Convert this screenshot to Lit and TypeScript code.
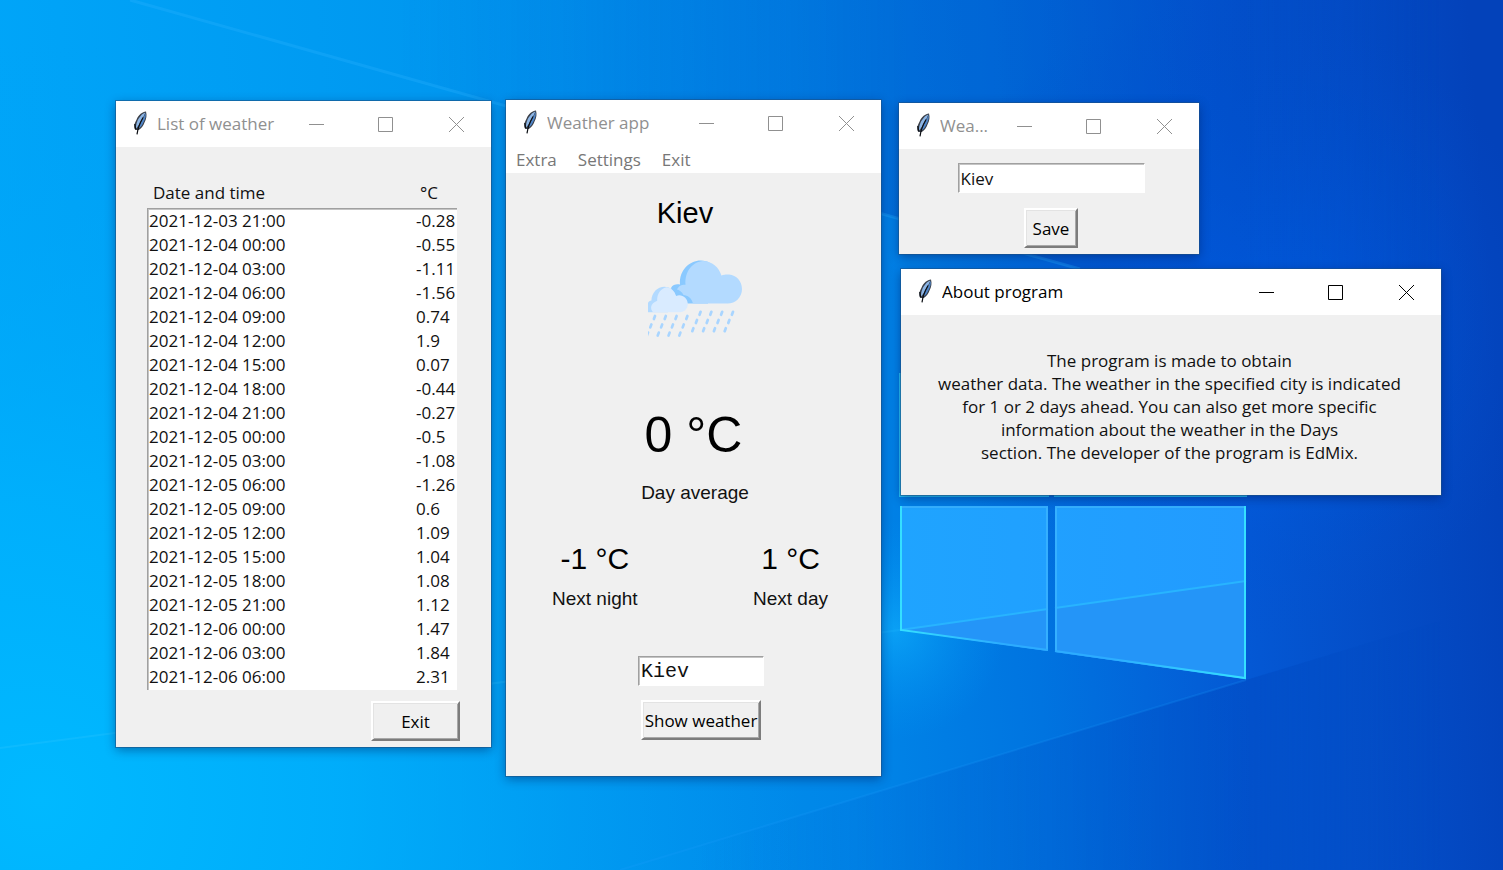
import { LitElement, html, svg, css } from "lit";
import { customElement, property } from "lit/decorators.js";

interface Reading {
  time: string;
  temp: string;
}

const READINGS: Reading[] = [
  { time: "2021-12-03 21:00", temp: "-0.28" },
  { time: "2021-12-04 00:00", temp: "-0.55" },
  { time: "2021-12-04 03:00", temp: "-1.11" },
  { time: "2021-12-04 06:00", temp: "-1.56" },
  { time: "2021-12-04 09:00", temp: "0.74" },
  { time: "2021-12-04 12:00", temp: "1.9" },
  { time: "2021-12-04 15:00", temp: "0.07" },
  { time: "2021-12-04 18:00", temp: "-0.44" },
  { time: "2021-12-04 21:00", temp: "-0.27" },
  { time: "2021-12-05 00:00", temp: "-0.5" },
  { time: "2021-12-05 03:00", temp: "-1.08" },
  { time: "2021-12-05 06:00", temp: "-1.26" },
  { time: "2021-12-05 09:00", temp: "0.6" },
  { time: "2021-12-05 12:00", temp: "1.09" },
  { time: "2021-12-05 15:00", temp: "1.04" },
  { time: "2021-12-05 18:00", temp: "1.08" },
  { time: "2021-12-05 21:00", temp: "1.12" },
  { time: "2021-12-06 00:00", temp: "1.47" },
  { time: "2021-12-06 03:00", temp: "1.84" },
  { time: "2021-12-06 06:00", temp: "2.31" },
];

/** Classic raised buttons and sunken entries, shared by every window. */
const controls = css`
  button.raised {
    box-sizing: border-box;
    height: 40px;
    padding: 0;
    border: 2px solid;
    border-color: #ffffff #7c7c7c #7c7c7c #ffffff;
    background: #f0f0f0;
    box-shadow: inset 1px 1px 0 #e3e3e3, inset -1px -1px 0 #a8a8a8;
    color: #000;
    font: inherit;
    white-space: nowrap;
  }
  input.sunken {
    box-sizing: border-box;
    height: 30px;
    padding: 0 2px;
    border: 1px solid;
    border-color: #a0a0a0 #ffffff #ffffff #a0a0a0;
    border-radius: 0;
    outline: none;
    background: #fff;
    box-shadow: inset 1px 1px 0 #c4c4c4;
    color: #111;
    font: inherit;
  }
`;

@customElement("desktop-wallpaper")
export class DesktopWallpaper extends LitElement {
  static styles = css`
    :host {
      display: block;
    }
    svg {
      display: block;
      width: 100%;
      height: 100%;
    }
  `;

  render() {
    return html`
      <svg viewBox="0 0 1503 870" preserveAspectRatio="xMidYMid slice" aria-hidden="true">
        <defs>
          <linearGradient id="base" gradientUnits="userSpaceOnUse" x1="0" y1="520" x2="1500" y2="400">
            <stop offset="0" stop-color="#00a6f9" />
            <stop offset="0.3" stop-color="#0098f0" />
            <stop offset="0.55" stop-color="#0086e8" />
            <stop offset="0.68" stop-color="#0074e0" />
            <stop offset="0.82" stop-color="#0458d4" />
            <stop offset="1" stop-color="#0342ba" />
          </linearGradient>
          <radialGradient id="cyan" gradientUnits="userSpaceOnUse" cx="40" cy="800" r="760">
            <stop offset="0" stop-color="#00b9ff" />
            <stop offset="0.4" stop-color="#00b2fd" stop-opacity="0.75" />
            <stop offset="1" stop-color="#00a0f4" stop-opacity="0" />
          </radialGradient>
          <radialGradient id="glow" gradientUnits="userSpaceOnUse" cx="1230" cy="320" r="320">
            <stop offset="0" stop-color="#0066f0" stop-opacity="0.8" />
            <stop offset="1" stop-color="#0050d0" stop-opacity="0" />
          </radialGradient>
          <radialGradient id="flare" gradientUnits="userSpaceOnUse" cx="895" cy="630" r="110">
            <stop offset="0" stop-color="#10b4ff" stop-opacity="0.6" />
            <stop offset="1" stop-color="#0098f4" stop-opacity="0" />
          </radialGradient>
          <linearGradient id="upper" gradientUnits="userSpaceOnUse" x1="400" y1="0" x2="1250" y2="0">
            <stop offset="0" stop-color="#0058c8" stop-opacity="0" />
            <stop offset="0.6" stop-color="#0050c4" stop-opacity="0.35" />
            <stop offset="1" stop-color="#0044bc" stop-opacity="0.35" />
          </linearGradient>
          <linearGradient id="lower" gradientUnits="userSpaceOnUse" x1="700" y1="0" x2="1250" y2="0">
            <stop offset="0" stop-color="#0064d4" stop-opacity="0" />
            <stop offset="1" stop-color="#0048c0" stop-opacity="0.5" />
          </linearGradient>
          <linearGradient id="fade" gradientUnits="userSpaceOnUse" x1="1246" y1="0" x2="1440" y2="0">
            <stop offset="0" stop-color="#fff" />
            <stop offset="1" stop-color="#000" />
          </linearGradient>
          <mask id="fadeRight" maskUnits="userSpaceOnUse" x="0" y="0" width="1503" height="870">
            <rect width="1503" height="870" fill="url(#fade)" />
          </mask>
          <linearGradient id="pane" gradientUnits="userSpaceOnUse" x1="900" y1="0" x2="1246" y2="0">
            <stop offset="0" stop-color="#1fa4ff" />
            <stop offset="1" stop-color="#229bff" />
          </linearGradient>
          <linearGradient id="edge" gradientUnits="userSpaceOnUse" x1="900" y1="0" x2="1246" y2="0">
            <stop offset="0" stop-color="#35e0ff" />
            <stop offset="0.3" stop-color="#2cacff" />
            <stop offset="0.6" stop-color="#2cacff" />
            <stop offset="1" stop-color="#35e0ff" />
          </linearGradient>
        </defs>
        <rect width="1503" height="870" fill="url(#base)" />
        <rect width="1503" height="870" fill="url(#cyan)" />
        <rect width="1503" height="870" fill="url(#glow)" />
        <path d="M130 0 L510 107 L900 219 L1246 315 L1503 386 L1503 0 Z" fill="url(#upper)" mask="url(#fadeRight)" />
        <path d="M130 0 L510 107 L900 219 L1080 269" fill="none" stroke="#2ab4ff" stroke-opacity="0.3" stroke-width="3" />
        <path d="M0 748 L900 630" stroke="#40ccff" stroke-opacity="0.2" stroke-width="2" />
        <path d="M1246 680 L620 870 L1503 870 L1503 602 Z" fill="url(#lower)" mask="url(#fadeRight)" />
        <path d="M1246 680 L620 870" stroke="#1ea0ff" stroke-opacity="0.2" stroke-width="2" />
        <circle cx="895" cy="630" r="110" fill="url(#flare)" />

        <path d="M900 374 H1048 V496 H900 Z M1055 340 H1246 V496 H1055 Z" fill="url(#pane)" stroke="#25c4f8" stroke-width="2" />
        <path d="M900 506 H1048 V651 L900 630 Z" fill="url(#pane)" />
        <path d="M1055 506 H1246 V679 L1055 652 Z" fill="url(#pane)" />
        <path d="M900 630 L1048 609 V651 Z M1055 608 L1246 581 V679 L1055 652 Z" fill="#2495f8" />
        <path d="M900 630 L1048 609 M1055 608 L1246 581" stroke="#28b4ff" stroke-width="2" />
        <path d="M900 507 H1047 V650 M1246 507 H1056 V652" fill="none" stroke="#35b0ff" stroke-width="2" />
        <path d="M901 506 V630 L1048 650 M1055 651 L1245 678 V506" fill="none" stroke="url(#edge)" stroke-width="2" />
      </svg>
    `;
  }
}

@customElement("tk-window")
export class TkWindow extends LitElement {
  @property() heading = "";
  @property({ type: Boolean, reflect: true }) active = false;

  static styles = css`
    :host {
      display: block;
      background: #f0f0f0;
      box-shadow: 0 0 0 1px rgba(30, 80, 130, 0.55), 0 3px 10px rgba(0, 20, 80, 0.45);
      color: #111;
      --ink: #909090;
    }
    :host([active]) {
      --ink: #000;
    }
    .bar {
      display: flex;
      align-items: center;
      height: 46px;
      padding-left: 16px;
      background: #fff;
      color: var(--ink);
    }
    .feather {
      flex: none;
      width: 16px;
      height: 24px;
      margin-bottom: 2px;
    }
    .title {
      flex: 1;
      min-width: 0;
      margin: 0 0 0 9px;
      overflow: hidden;
      font-size: 17px;
      font-weight: 400;
      line-height: 24px;
      white-space: nowrap;
    }
    .control {
      display: grid;
      flex: none;
      place-items: center;
      width: 70px;
      height: 44px;
      padding: 0;
      border: 0;
      background: none;
      color: inherit;
    }
    .control svg {
      width: 17px;
      height: 17px;
      fill: none;
      stroke: currentColor;
    }
  `;

  render() {
    return html`
      <header class="bar">
        <svg class="feather" viewBox="0 0 16 24" aria-hidden="true">
          <path d="M14 0.6 C10.5 0.8 6.5 4 4.6 8.5 C3 11.5 1.8 14 2.3 17 L3.2 19 L6.8 19 C9.5 17.5 11.5 14.5 12.5 11.5 C14.5 8 15 4 14 0.6 Z" fill="#3a3f48" />
          <path d="M13.4 1.4 C10.2 2.4 7 6 5.4 10 C4.4 12.6 3.6 15.4 4.2 17.6 C7.5 13 10.4 8 13.4 1.4 Z" fill="#8db6e6" />
          <path d="M13.6 1.8 C11.6 7 8.8 12.6 5.8 18 C8.6 16.8 10.4 13.8 11.5 11.2 C13.4 8 14.2 5 13.6 1.8 Z" fill="#4f86ca" />
          <path d="M11 6.5 C8.4 11 6 15.4 5 23.4" fill="none" stroke="#0a0d12" stroke-width="1.2" />
          <path d="M2.8 13 L3.6 18" fill="none" stroke="#0a0d12" stroke-width="1.2" />
        </svg>
        <h2 class="title">${this.heading}</h2>
        <button class="control" type="button" aria-label="Minimize">
          <svg viewBox="0 0 17 17"><path d="M1 8.5H16" /></svg>
        </button>
        <button class="control" type="button" aria-label="Maximize">
          <svg viewBox="0 0 17 17"><path d="M0.5 1.5H14.5V15.5H0.5Z" /></svg>
        </button>
        <button class="control" type="button" aria-label="Close">
          <svg viewBox="0 0 17 17"><path d="M1 1L16 16M16 1L1 16" /></svg>
        </button>
      </header>
      <slot></slot>
    `;
  }
}

@customElement("rain-icon")
export class RainIcon extends LitElement {
  static styles = css`
    :host {
      display: block;
    }
    svg {
      display: block;
      width: 94px;
      height: 78px;
    }
  `;

  private drops() {
    const starts = [
      [52.6, 51.8, 4],
      [49, 60, 4],
      [45.4, 68.2, 4],
      [7, 56, 4],
      [3.4, 64.4, 4],
      [0, 72.6, 4],
    ];
    return starts.flatMap(([x, y, count]) =>
      Array.from({ length: count }, (_, i) => svg`<path d="M${x + i * 10.8} ${y} l-1.1 3" />`),
    );
  }

  render() {
    return html`
      <svg viewBox="0 0 94 78" role="img" aria-label="Rain">
        <path d="M33 43.5 C28 40 22.5 32 23.2 27.5 C25 24 29 23.8 32 24.4 C31 10 42 0.4 53 0.6 C60 0.8 64 4 66 8 L60 43.5 Z" fill="#8ac9ff" />
        <path d="M45 43.5 C43.5 37.5 39.5 35.5 35.5 35 C34 31.5 31 30 29 29.5 C31 25.5 34 24.6 37.5 24.8 C36.5 11 45 1.6 55 1 C64 1.2 71 7 73.4 15.6 C76.5 14.4 79 14.3 81 14.6 C88.5 15.2 94 21.5 94 29 C94 37.5 87.5 43.5 79.5 43.5 Z" fill="#b3daff" />
        <path d="M0 52.2 V43 C0.5 41.5 2 41 3.4 40.6 C3.6 32.5 9.6 26.8 16.4 26.8 C21 26.8 25 29.6 27 33.4 L20 52.2 Z" fill="#b3daff" />
        <path d="M5 52.2 C2 49 2 43.5 9.2 40.8 C8.6 33.5 13.5 28 18.6 27.2 C23.6 28 26.6 31.4 28.2 36 C33.5 33.6 39.8 38 39.8 44 C39.8 49 36 52.2 32 52.2 Z" fill="#d9ebff" />
        <g fill="none" stroke="#a9d5ff" stroke-width="2.7" stroke-linecap="round">${this.drops()}</g>
      </svg>
    `;
  }
}

@customElement("weather-list")
export class WeatherList extends LitElement {
  static styles = [
    controls,
    css`
      :host {
        display: flex;
        flex-direction: column;
        padding: 30px 31px 6px;
        gap: 11px;
      }
      table {
        margin-right: 3px;
        border-spacing: 0;
        table-layout: fixed;
      }
      .time {
        width: 267px;
      }
      th {
        height: 31px;
        padding: 0 0 0 6px;
        font-weight: 400;
        text-align: left;
      }
      tbody {
        background: #fff;
        box-shadow: inset 1px 1px 0 #a0a0a0, inset 2px 2px 0 #c4c4c4;
      }
      td {
        height: 24px;
        padding: 0 0 0 2px;
        line-height: 24px;
        white-space: nowrap;
      }
      tr:first-child td {
        padding-top: 1px;
      }
      tr:last-child td {
        padding-bottom: 1px;
      }
      .exit {
        align-self: flex-end;
        width: 89px;
      }
    `,
  ];

  render() {
    return html`
      <table>
        <colgroup>
          <col class="time" />
          <col />
        </colgroup>
        <thead>
          <tr>
            <th scope="col">Date and time</th>
            <th scope="col">°C</th>
          </tr>
        </thead>
        <tbody>
          ${READINGS.map((r) => html`<tr><td>${r.time}</td><td>${r.temp}</td></tr>`)}
        </tbody>
      </table>
      <button class="raised exit" type="button">Exit</button>
    `;
  }
}

@customElement("weather-panel")
export class WeatherPanel extends LitElement {
  static styles = [
    controls,
    css`
      :host {
        display: block;
      }
      .menu {
        display: flex;
        gap: 21px;
        height: 27px;
        padding: 0 10px;
        background: #fff;
      }
      .menu button {
        padding: 0;
        border: 0;
        background: none;
        color: #777;
        font: inherit;
        line-height: 28px;
      }
      .body {
        display: flex;
        flex-direction: column;
        align-items: center;
        padding: 20px 0 36px;
        color: #000;
        font-family: "Liberation Sans", Arial, sans-serif;
      }
      h1,
      p {
        margin: 0;
        font-weight: 400;
      }
      .city {
        padding-right: 17px;
        font-size: 29px;
        line-height: 40px;
      }
      rain-icon {
        margin-top: 27px;
        padding-left: 2px;
      }
      .now {
        margin-top: 68px;
        font-size: 50px;
        line-height: 58px;
      }
      .label {
        color: #111;
        font-size: 19px;
        line-height: 24px;
      }
      .today {
        margin-top: 17px;
        padding-left: 3px;
      }
      .next {
        display: flex;
        align-self: stretch;
        justify-content: space-between;
        margin-top: 36px;
        padding: 0 53px 0 46px;
        text-align: center;
      }
      .value {
        font-size: 30px;
        line-height: 36px;
      }
      .next .label {
        margin-top: 10px;
      }
      form {
        display: flex;
        flex-direction: column;
        align-items: center;
        gap: 14px;
        margin-top: 45px;
        padding-left: 15px;
        font-family: var(--ui-font);
      }
      input.entry {
        width: 126px;
        font-family: "Liberation Mono", "Courier New", monospace;
        font-size: 20px;
      }
      .show {
        width: 120px;
      }
    `,
  ];

  render() {
    return html`
      <nav class="menu">
        <button type="button">Extra</button>
        <button type="button">Settings</button>
        <button type="button">Exit</button>
      </nav>
      <div class="body">
        <h1 class="city">Kiev</h1>
        <rain-icon></rain-icon>
        <p class="now">0 °C</p>
        <p class="label today">Day average</p>
        <div class="next">
          <div>
            <p class="value">-1 °C</p>
            <p class="label">Next night</p>
          </div>
          <div>
            <p class="value">1 °C</p>
            <p class="label">Next day</p>
          </div>
        </div>
        <form @submit=${(e: Event) => e.preventDefault()}>
          <input class="sunken entry" type="text" aria-label="City" .value=${"Kiev"} />
          <button class="raised show" type="submit">Show weather</button>
        </form>
      </div>
    `;
  }
}

@customElement("city-settings")
export class CitySettings extends LitElement {
  static styles = [
    controls,
    css`
      form {
        display: flex;
        flex-direction: column;
        align-items: center;
        gap: 15px;
        padding: 14px 0 6px 4px;
      }
      .entry {
        width: 187px;
      }
      .save {
        width: 54px;
      }
    `,
  ];

  render() {
    return html`
      <form @submit=${(e: Event) => e.preventDefault()}>
        <input class="sunken entry" type="text" aria-label="Default city" .value=${"Kiev"} />
        <button class="raised save" type="submit">Save</button>
      </form>
    `;
  }
}

@customElement("app-root")
export class AppRoot extends LitElement {
  static styles = css`
    :host {
      --ui-font: "Open Sans", "Noto Sans", sans-serif;
      display: block;
      position: relative;
      min-height: 100vh;
      overflow: hidden;
      font-family: var(--ui-font);
      font-size: 17px;
    }
    desktop-wallpaper {
      position: absolute;
      inset: 0;
    }
    tk-window {
      position: absolute;
    }
    .list {
      left: 116px;
      top: 101px;
      width: 375px;
    }
    .main {
      left: 506px;
      top: 100px;
      width: 375px;
    }
    .settings {
      left: 899px;
      top: 103px;
      width: 300px;
    }
    .about {
      left: 901px;
      top: 269px;
      width: 540px;
    }
    .text {
      margin: 0;
      padding: 34px 3px 31px 0;
      line-height: 23px;
      text-align: center;
    }
  `;

  render() {
    return html`
      <desktop-wallpaper></desktop-wallpaper>
      <tk-window class="list" heading="List of weather"><weather-list></weather-list></tk-window>
      <tk-window class="main" heading="Weather app"><weather-panel></weather-panel></tk-window>
      <tk-window class="settings" heading="Wea..."><city-settings></city-settings></tk-window>
      <tk-window class="about" heading="About program" active>
        <p class="text">
          The program is made to obtain<br />
          weather data. The weather in the specified city is indicated<br />
          for 1 or 2 days ahead. You can also get more specific<br />
          information about the weather in the Days<br />
          section. The developer of the program is EdMix.
        </p>
      </tk-window>
    `;
  }
}
